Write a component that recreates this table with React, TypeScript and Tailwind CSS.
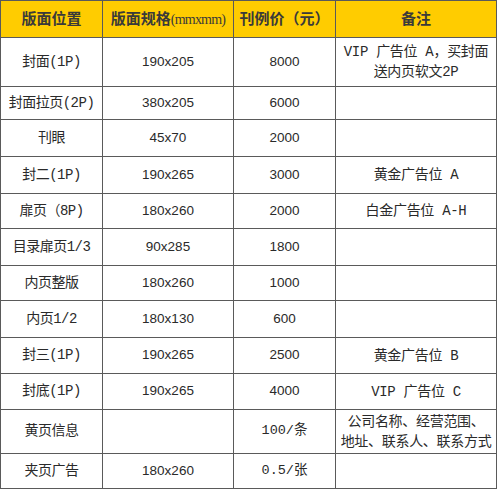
const serif = "font-['Liberation_Mono','Noto_Sans_CJK_SC',monospace]";
const sans = "font-['Liberation_Sans','Noto_Sans_CJK_SC',sans-serif]";

type Row = { h: string; cells: [string, string, string, React.ReactNode] };

const rows: Row[] = [
	{ h: "h-[49px]", cells: ["封面(1P)", "190x205", "8000", <>VIP 广告位 A，买封面<br />送内页软文2P</>] },
	{ h: "h-[33px]", cells: ["封面拉页(2P)", "380x205", "6000", ""] },
	{ h: "h-[37px]", cells: ["刊眼", "45x70", "2000", ""] },
	{ h: "h-[37px]", cells: ["封二(1P)", "190x265", "3000", "黄金广告位 A"] },
	{ h: "h-[35px]", cells: ["扉页（8P)", "180x260", "2000", "白金广告位 A-H"] },
	{ h: "h-[37px]", cells: ["目录扉页1/3", "90x285", "1800", ""] },
	{ h: "h-[35px]", cells: ["内页整版", "180x260", "1000", ""] },
	{ h: "h-[37px]", cells: ["内页1/2", "180x130", "600", ""] },
	{ h: "h-[36px]", cells: ["封三(1P)", "190x265", "2500", "黄金广告位 B"] },
	{ h: "h-[36px]", cells: ["封底(1P)", "190x265", "4000", "VIP 广告位 C"] },
	{ h: "h-[44px]", cells: ["黄页信息", "", "100/条", <>公司名称、经营范围、<br />地址、联系人、联系方式</>] },
	{ h: "h-[35px]", cells: ["夹页广告", "180x260", "0.5/张", ""] },
];

const cell = "flex items-center justify-center text-center whitespace-nowrap border-r border-b border-[#5a5a5a] text-[#2a2a2a]";

export default function App() {
	return (
		<div className="w-[500px] h-[492px] bg-white">
			<div className="grid w-[497px] grid-cols-[102px_131px_102px_161px] border-l border-t border-[#5a5a5a]">
				{/* Header */}
				<div className={`${cell} ${sans} h-[37px] bg-[#ffcc00] text-[15px] font-semibold text-[#3a3a3a]`}>版面位置</div>
				<div className={`${cell} ${sans} h-[37px] bg-[#ffcc00] text-[15px] font-semibold text-[#3a3a3a]`}>
					版面规格<span className="font-['Liberation_Serif',serif] text-[14px] font-normal tracking-[-0.8px]">(mmxmm)</span>
				</div>
				<div className={`${cell} ${sans} h-[37px] bg-[#ffcc00] text-[15px] font-semibold text-[#3a3a3a]`}>刊例价（元）</div>
				<div className={`${cell} ${sans} h-[37px] bg-[#ffcc00] text-[15px] font-semibold text-[#3a3a3a]`}>备注</div>

				{/* Body */}
				{rows.map((r, i) => (
					<div key={i} className="contents">
						<div className={`${cell} ${serif} ${r.h} text-[14px] tracking-[-0.5px]`}>{r.cells[0]}</div>
						<div className={`${cell} ${sans} ${r.h} text-[13.5px]`}>{r.cells[1]}</div>
						<div className={`${cell} ${r.cells[2].includes("/") ? serif : sans} ${r.h} text-[13.5px]`}>{r.cells[2]}</div>
						<div className={`${cell} ${serif} ${r.h} text-[14px] leading-[20px] tracking-[-0.3px]`}>{r.cells[3]}</div>
					</div>
				))}
			</div>
		</div>
	);
}
